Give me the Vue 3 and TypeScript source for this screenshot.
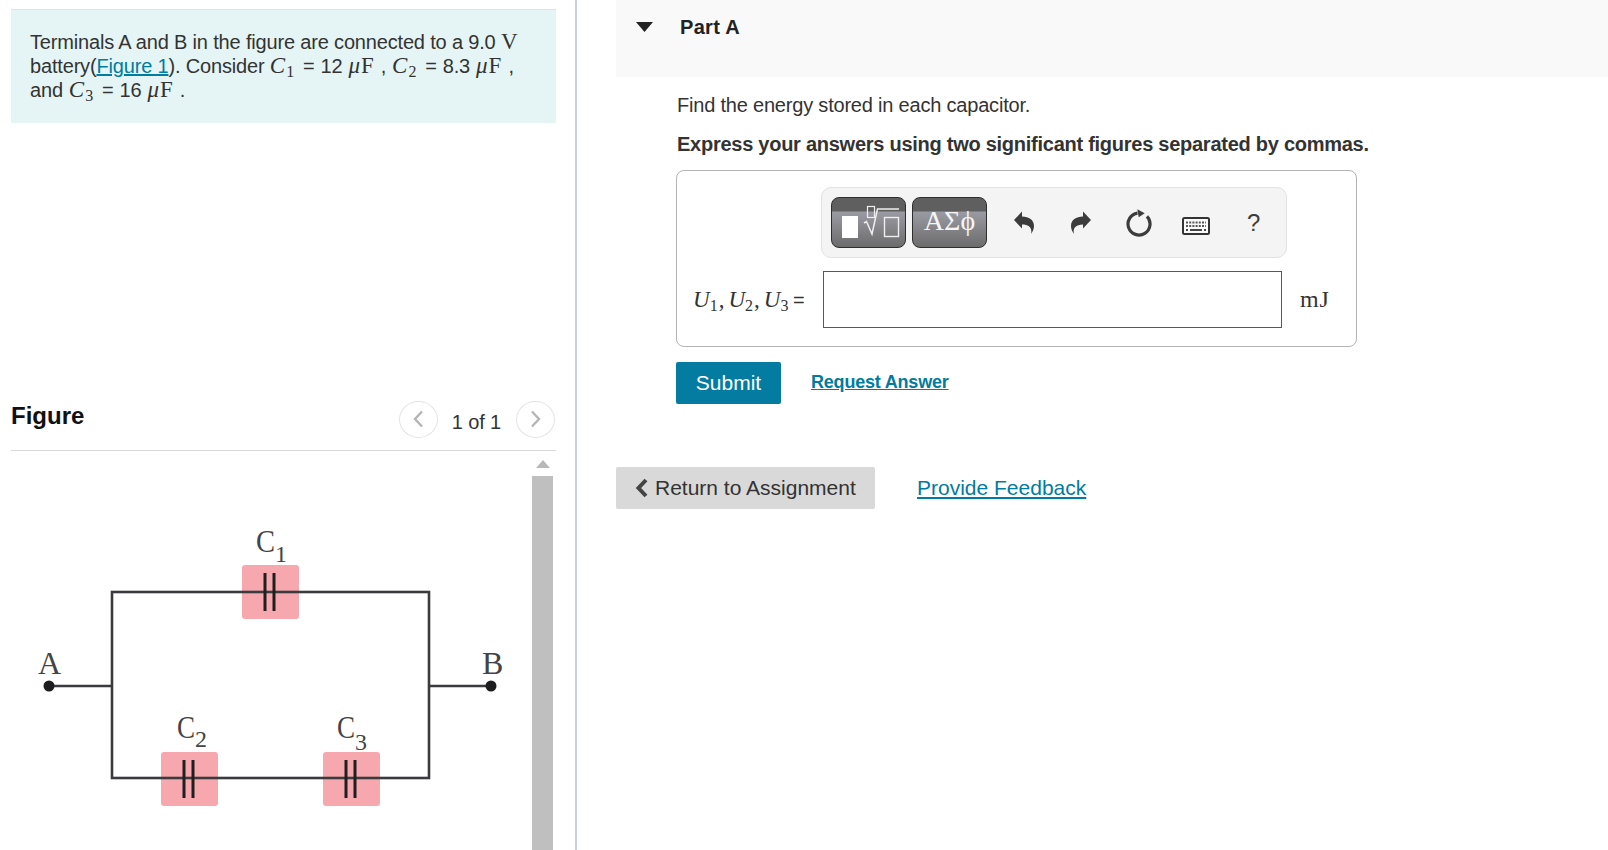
<template>
  <div class="page">
    <!-- left column: problem text and figure -->
    <aside class="left">
      <div class="intro">
        <p>
          Terminals A and B in the figure are connected to a 9.0 <span class="rm">V</span><br />
          battery(<a class="fig-link">Figure 1</a>). Consider
          <span class="vals"><span class="mi">C</span><sub class="sb">1</sub> = 12 <span class="mi">μ</span><span class="rm">F</span> ,
          <span class="mi">C</span><sub class="sb">2</sub> = 8.3 <span class="mi">μ</span><span class="rm">F</span> ,<br />
          and <span class="mi">C</span><sub class="sb">3</sub> = 16 <span class="mi">μ</span><span class="rm">F</span> .</span>
        </p>
      </div>

      <div class="figure-head">
        <h2>Figure</h2>
        <div class="pager">
          <span class="round">
            <svg width="12" height="18" viewBox="0 0 12 18"><path d="M10 1.500 3 9l7 7.500" /></svg>
          </span>
          <span class="count">1 of 1</span>
          <span class="round">
            <svg width="12" height="18" viewBox="0 0 12 18"><path d="M2 1.500 9 9l-7 7.500" /></svg>
          </span>
        </div>
      </div>

      <div class="figure-body">
        <svg class="circuit" width="521" height="399" viewBox="0 0 521 399">
          <g fill="#f7a8ae">
            <rect x="231" y="114" width="57" height="54" rx="3" />
            <rect x="150" y="301" width="57" height="54" rx="3" />
            <rect x="312" y="301" width="57" height="54" rx="3" />
          </g>
          <g fill="none" stroke="#3b3b3d" stroke-width="2.600">
            <rect x="101" y="141" width="317" height="186" />
            <path d="M38 235H101M418 235H480" />
          </g>
          <g stroke="#1f1f21" stroke-width="3">
            <path d="M254 122v38M263 122v38" />
            <path d="M173 309v38M182 309v38" />
            <path d="M335 309v38M344 309v38" />
          </g>
          <circle cx="38" cy="235" r="5.500" fill="#1d1d1f" />
          <circle cx="480" cy="235" r="5.500" fill="#1d1d1f" />
          <g class="lbl">
            <text x="27" y="223">A</text>
            <text x="471" y="223">B</text>
            <text x="245" y="101" textLength="19" lengthAdjust="spacingAndGlyphs">C</text>
            <text class="lsub" x="264" y="111">1</text>
            <text x="166" y="287" textLength="18" lengthAdjust="spacingAndGlyphs">C</text>
            <text class="lsub" x="184" y="296">2</text>
            <text x="326" y="287" textLength="18" lengthAdjust="spacingAndGlyphs">C</text>
            <text class="lsub" x="344" y="299">3</text>
          </g>
        </svg>
        <div class="scrollbar">
          <svg width="14" height="8" viewBox="0 0 14 8"><path d="M7 0 14 8H0z" /></svg>
          <div class="thumb"></div>
        </div>
      </div>
    </aside>

    <!-- right column: part A -->
    <main class="right">
      <header class="part-head">
        <svg class="caret" width="17" height="10" viewBox="0 0 17 10"><path d="M0 0h17L8.500 10z" /></svg>
        <h3>Part A</h3>
      </header>

      <section class="part-body">
        <p class="find">Find the energy stored in each capacitor.</p>
        <p class="express">Express your answers using two significant figures separated by commas.</p>

        <div class="answer">
          <div class="toolbar">
            <button class="tool">
              <svg width="73" height="49" viewBox="0 0 73 49">
                <rect x="10" y="18" width="16" height="22" fill="#fff" />
                <rect x="35.500" y="8.500" width="7" height="11" fill="none" stroke="#eee" stroke-width="1.200" />
                <path d="M32 25l2.500-1.500L40 36l5.500-25H67" fill="none" stroke="#eee" stroke-width="1.500" />
                <rect x="52.500" y="19.500" width="14" height="19" fill="none" stroke="#eee" stroke-width="1.400" />
              </svg>
            </button>
            <button class="tool greek">ΑΣϕ</button>
            <div class="actions">
              <span class="cell">
                <svg width="22" height="26" viewBox="0 0 22 26">
                  <path d="M1 10 9 1.500v5C16 6.500 21 10 21 16c0 3-1.500 6-3 8 1.500-6-2-9.500-9-9.500v4z" fill="#3c3c3c" />
                </svg>
              </span>
              <span class="cell">
                <svg width="22" height="26" viewBox="0 0 22 26">
                  <path d="M21 10 13 1.500v5C6 6.500 1 10 1 16c0 3 1.500 6 3 8-1.500-6 2-9.500 9-9.500v4z" fill="#3c3c3c" />
                </svg>
              </span>
              <span class="cell">
                <svg width="26" height="28" viewBox="0 0 26 28">
                  <path d="M11.500 4.100A11 11 0 1 0 21 7.400" fill="none" stroke="#3c3c3c" stroke-width="3.200" />
                  <path d="M11.300.3 18.700 4.300 12.700 8.300z" fill="#3c3c3c" />
                </svg>
              </span>
              <span class="cell keys">
                <svg width="28" height="18" viewBox="0 0 28 18">
                  <rect x="1" y="1" width="26" height="16" rx="1.500" fill="#fafafa" stroke="#333" stroke-width="2" />
                  <path d="M4 5.500h20M4 9h20" stroke="#555" stroke-width="1.800" stroke-dasharray="2 1.200" />
                  <path d="M4 13h2M8 13h12M22 13h2" stroke="#444" stroke-width="1.800" />
                </svg>
              </span>
              <span class="cell help">?</span>
            </div>
          </div>

          <div class="entry">
            <span class="entry-label">
              <span class="mi">U</span><sub class="sb">1</sub><span class="rm cm">,</span><span class="mi">U</span><sub class="sb">2</sub><span class="rm cm">,</span><span class="mi">U</span><sub class="sb">3</sub> =
            </span>
            <div class="input"></div>
            <span class="unit">mJ</span>
          </div>
        </div>

        <div class="submit-row">
          <button class="submit">Submit</button>
          <a class="request">Request Answer</a>
        </div>
      </section>

      <footer class="foot">
        <button class="back">
          <svg width="14" height="20" viewBox="0 0 14 20"><path d="M11 2 3.500 10l7.500 8" /></svg>
          Return to Assignment
        </button>
        <a class="feedback">Provide Feedback</a>
      </footer>
    </main>
  </div>
</template>

<script setup lang="ts">
</script>

<style>
html,
body {
  margin: 0;
  overflow: hidden;
}
</style>

<style scoped>
.page {
  display: flex;
  width: 1608px;
  height: 850px;
  overflow: hidden;
  background: #fff;
  color: #333;
  font-family: "Liberation Sans", Arial, sans-serif;
  font-size: 20px;
}

/* left */
.left {
  box-sizing: border-box;
  width: 577px;
  flex: none;
  padding: 9px 19px 0 11px;
  border-right: 2px solid #c4d3e4;
}

.intro {
  box-sizing: border-box;
  height: 114px;
  padding: 20px 0 0 19px;
  background: #e5f5f6;
  border-top: 1px solid #dbe5e8;
}

.intro p {
  margin: 0;
  line-height: 24px;
  letter-spacing: -0.17px;
  white-space: nowrap;
}

.vals {
  word-spacing: 0.6px;
}

.mi {
  font-family: "Liberation Serif", serif;
  font-style: italic;
  font-size: 23px;
  letter-spacing: 1px;
}

.rm {
  font-family: "Liberation Serif", serif;
  font-size: 23px;
  letter-spacing: 1px;
}

.sb {
  font-family: "Liberation Serif", serif;
  font-size: 16px;
  line-height: 0;
  vertical-align: -4px;
  margin-right: 3px;
}

.fig-link {
  color: #007c9f;
  text-decoration: underline;
}

.figure-head {
  display: flex;
  align-items: flex-start;
  justify-content: space-between;
  height: 51px;
  margin-top: 277px;
  box-sizing: border-box;
  border-bottom: 1px solid #d9d9d9;
}

.figure-head h2 {
  margin: 0;
  padding-top: 2px;
  color: #111;
  font-size: 24px;
  line-height: 28px;
}

.pager {
  display: flex;
  align-items: center;
  margin-right: 1px;
  height: 38px;
}

.round {
  display: flex;
  align-items: center;
  justify-content: center;
  box-sizing: border-box;
  width: 39px;
  height: 37px;
  border: 1px solid #e3e3e3;
  border-radius: 50%;
}

.round path {
  fill: none;
  stroke: #b5b5b5;
  stroke-width: 2.400;
}

.count {
  margin: 5px 15px 0 14px;
  line-height: 24px;
  letter-spacing: -0.15px;
}

.figure-body {
  display: flex;
  justify-content: space-between;
  height: 399px;
}

.lbl text {
  font-family: "Liberation Serif", serif;
  font-size: 32px;
  fill: #444;
}

.lbl .lsub {
  font-size: 24px;
}

.scrollbar {
  display: flex;
  flex-direction: column;
  align-items: center;
  width: 21px;
  margin-right: 3px;
  padding-top: 9px;
  box-sizing: border-box;
  flex: none;
}

.scrollbar path {
  fill: #b8b8b8;
}

.thumb {
  flex: 1;
  align-self: stretch;
  margin-top: 8px;
  background: #bfbfbf;
}

/* right */
.right {
  flex: 1;
  padding-left: 39px;
}

.part-head {
  display: flex;
  align-items: flex-start;
  height: 77px;
  box-sizing: border-box;
  padding: 15px 0 0 20px;
  background: #f9f9f9;
}

.caret {
  margin-top: 7px;
  fill: #222;
}

.part-head h3 {
  margin: 0 0 0 27px;
  color: #222;
  font-size: 20px;
  line-height: 24px;
  letter-spacing: 0.3px;
}

.part-body {
  padding-left: 60px;
}

.find {
  margin: 16px 0 0;
  padding-left: 1px;
  line-height: 24px;
  letter-spacing: -0.2px;
}

.express {
  margin: 15px 0 0;
  padding-left: 1px;
  font-weight: bold;
  line-height: 24px;
  letter-spacing: -0.26px;
}

.answer {
  box-sizing: border-box;
  width: 681px;
  height: 177px;
  margin-top: 14px;
  padding: 16px 0 0 16px;
  border: 1px solid #b3b3b3;
  border-radius: 8px;
}

.toolbar {
  display: flex;
  align-items: center;
  box-sizing: border-box;
  width: 466px;
  height: 71px;
  margin-left: 128px;
  padding-left: 9px;
  background: #f4f4f4;
  border: 1px solid #e2e2e2;
  border-radius: 10px;
}

.tool {
  box-sizing: border-box;
  width: 75px;
  height: 51px;
  margin-right: 6px;
  padding: 0;
  display: flex;
  align-items: center;
  justify-content: center;
  border: 1px solid #2e2e2e;
  border-radius: 8px;
  background: linear-gradient(#5f5f5f 0 13px, #9a9aa3 14px, #6c6c6c 100%);
}

.greek {
  color: #f5f5f5;
  font-family: "Liberation Serif", serif;
  font-size: 28px;
  padding-bottom: 3px;
}

.actions {
  display: flex;
  align-items: center;
  margin-left: 2px;
}

.cell {
  display: flex;
  align-items: center;
  justify-content: center;
  width: 57.500px;
}

.keys {
  margin-top: 7px;
}

.help {
  color: #3c3c3c;
  font-size: 24px;
  margin-top: 1px;
  margin-right: 2px;
}

.entry {
  display: flex;
  align-items: center;
  margin-top: 13px;
}

.entry-label {
  width: 130px;
  flex: none;
  white-space: nowrap;
  word-spacing: -2px;
}

.entry-label .mi {
  letter-spacing: 0;
}

.entry-label .sb {
  margin-right: 1px;
}

.cm {
  margin-right: 3px;
}

.input {
  box-sizing: border-box;
  width: 459px;
  height: 57px;
  border: 1px solid #0a7498;
}

.unit {
  margin-left: 18px;
  font-family: "Liberation Serif", serif;
  font-size: 24px;
  letter-spacing: 0.8px;
}

.submit-row {
  display: flex;
  align-items: center;
  margin-top: 15px;
}

.submit {
  box-sizing: border-box;
  width: 105px;
  height: 42px;
  padding: 0;
  border: none;
  border-radius: 2px;
  background: #047ba0;
  color: #fff;
  font-family: inherit;
  font-size: 21px;
}

.request {
  margin-left: 30px;
  margin-top: -1px;
  color: #007c9f;
  font-size: 18px;
  font-weight: bold;
  letter-spacing: -0.2px;
  text-decoration: underline;
}

.foot {
  display: flex;
  align-items: center;
  margin-top: 63px;
}

.back {
  display: flex;
  align-items: center;
  gap: 6px;
  box-sizing: border-box;
  width: 259px;
  height: 42px;
  padding: 0 0 0 19px;
  border: none;
  border-radius: 2px;
  background: #d9d9d9;
  color: #333;
  font-family: inherit;
  font-size: 21px;
  white-space: nowrap;
}

.back path {
  fill: none;
  stroke: #444;
  stroke-width: 4;
}

.feedback {
  margin-left: 42px;
  color: #007c9f;
  font-size: 21px;
  text-decoration: underline;
}
</style>
